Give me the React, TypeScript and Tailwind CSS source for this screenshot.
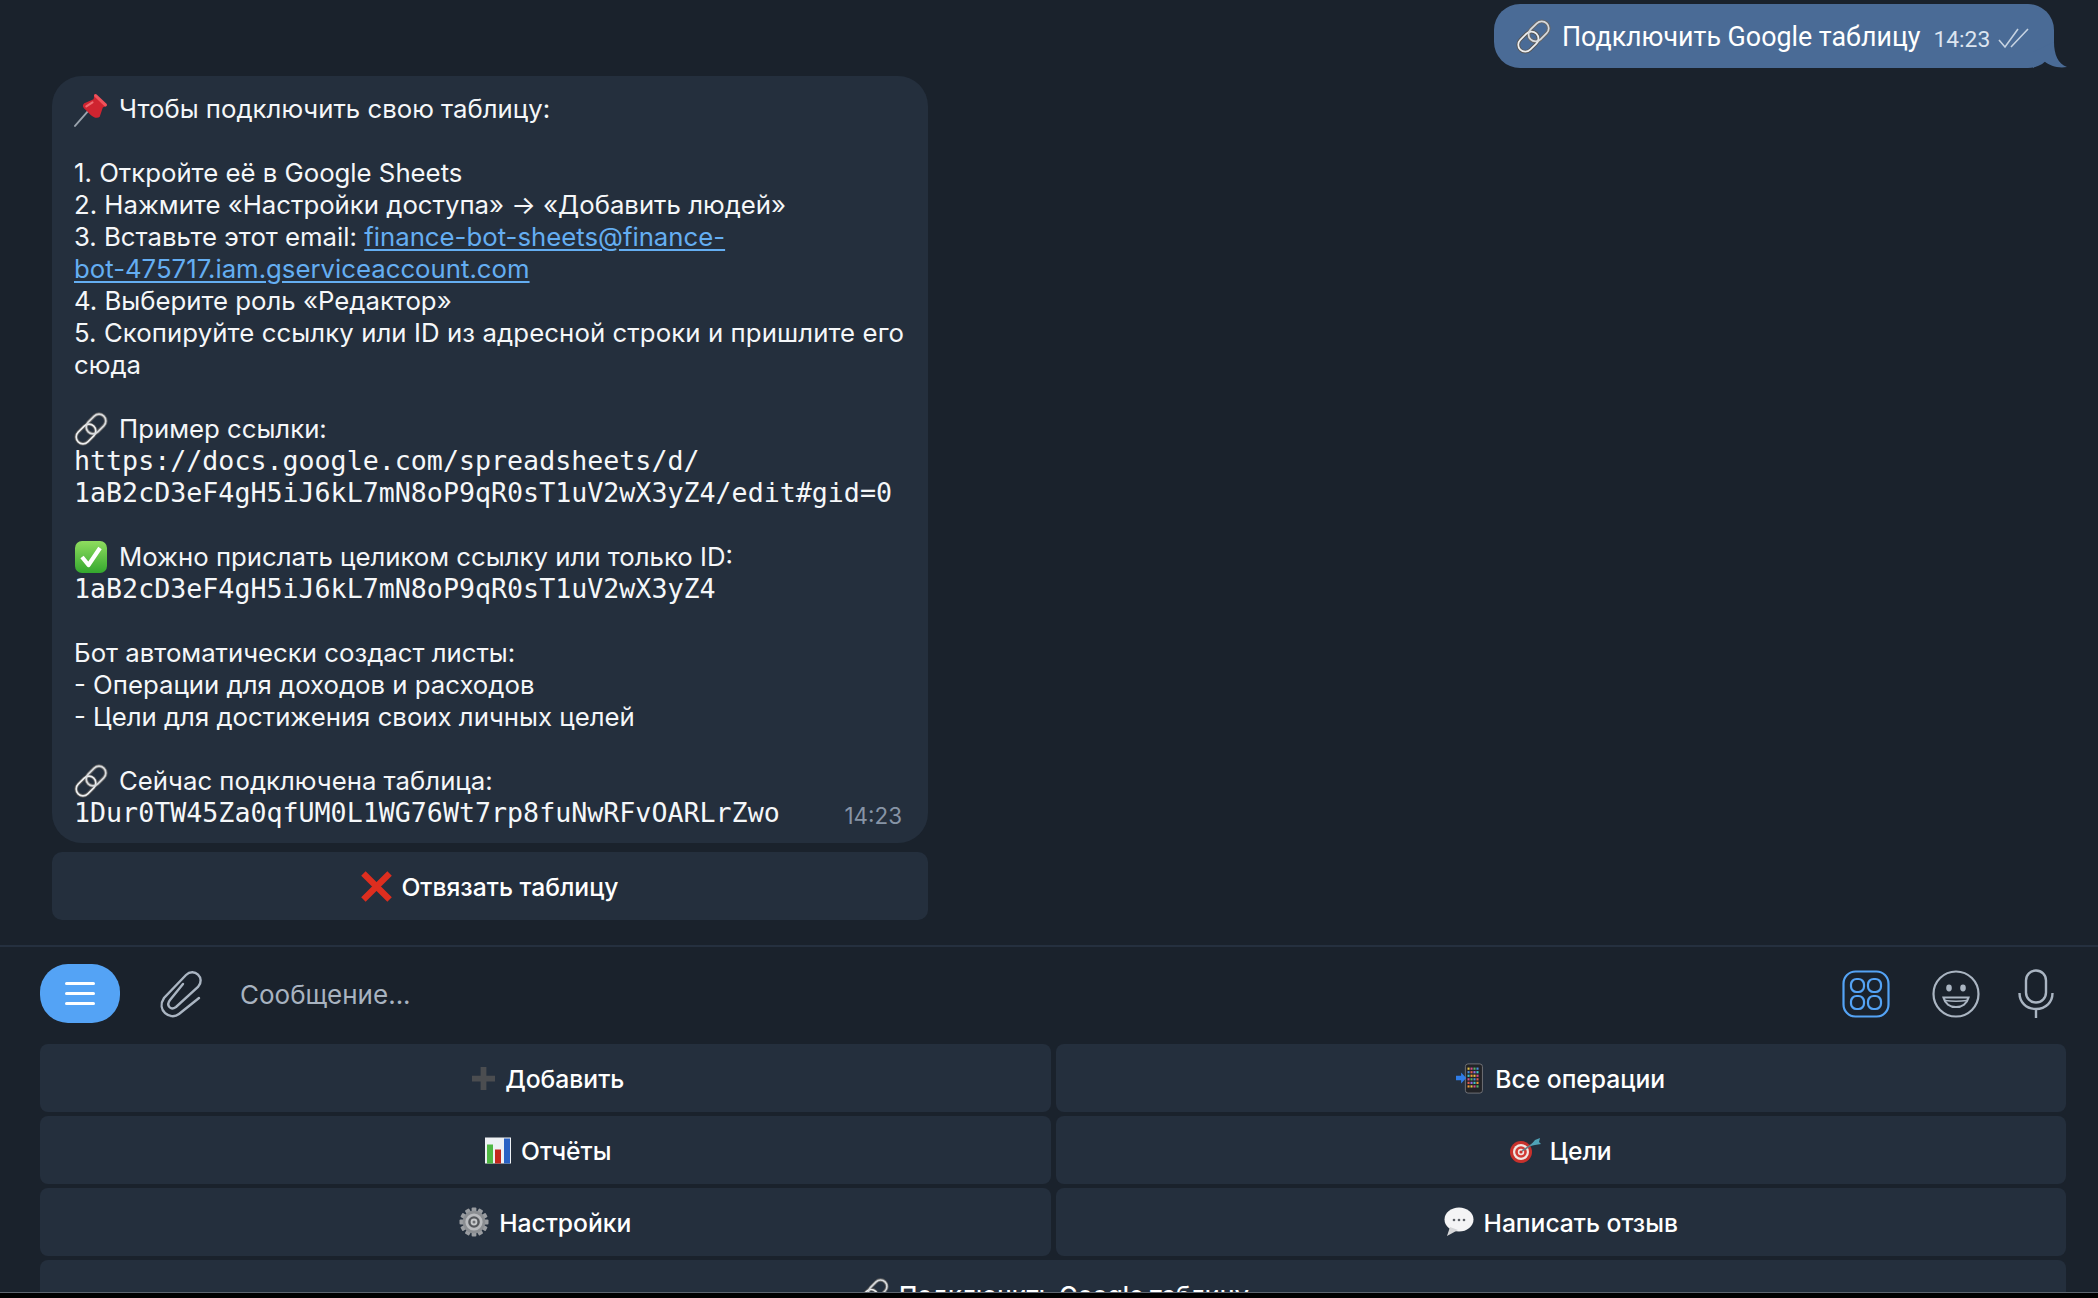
import React from 'react'

const sans = "font-['Inter','Noto_Sans',sans-serif]"

function LinkEmoji({ className = 'w-[34px] h-[34px]' }: { className?: string }) {
  return (
    <svg viewBox="2 2 30 30" className={`overflow-visible ${className}`} fill="none">
      <g transform="rotate(-45 17 17)">
        <rect x="1" y="11" width="19.5" height="12" rx="6" stroke="#565656" strokeWidth="3.2" />
        <rect x="13.5" y="11" width="19.5" height="12" rx="6" stroke="#666666" strokeWidth="3.2" />
        <rect x="1" y="11" width="19.5" height="12" rx="6" stroke="#eceef0" strokeWidth="1.5" />
        <rect x="13.5" y="11" width="19.5" height="12" rx="6" stroke="#d8dbde" strokeWidth="1.5" />
      </g>
    </svg>
  )
}

function PinEmoji() {
  return (
    <svg viewBox="0 0 34 34" className="w-[35px] h-[35px]">
      <path d="M1 33 L14 18" stroke="#9aa3ad" strokeWidth="1.8" strokeLinecap="round" />
      <path d="M20 2 L32 13 L28 15 L25 24 C23 26 19 25 16 22 L12 18 C8 15 8 13 10 11 L19 7 Z" fill="#cf2430" />
      <path d="M21 3.5 L30.5 12.5" stroke="#f0525b" strokeWidth="3" strokeLinecap="round" />
      <path d="M12 14 L18 10" stroke="#ef6a70" strokeWidth="2" strokeLinecap="round" />
    </svg>
  )
}

function CheckEmoji() {
  return (
    <svg viewBox="0 0 34 34" className="w-[34px] h-[34px]">
      <defs>
        <linearGradient id="checkBg" x1="0" y1="0" x2="0" y2="1">
          <stop offset="0" stopColor="#8fdc5f" />
          <stop offset="1" stopColor="#34a82e" />
        </linearGradient>
      </defs>
      <rect x="1" y="1" width="32" height="32" rx="7" fill="url(#checkBg)" />
      <path d="M8 17 L14.5 25 L26 8" fill="none" stroke="#fff" strokeWidth="4.2" strokeLinejoin="round" />
    </svg>
  )
}

function CrossEmoji() {
  return (
    <svg viewBox="0 0 32 32" className="w-[31px] h-[31px]">
      <path d="M2.5 2.5 L29.5 29.5 M29.5 2.5 L2.5 29.5" stroke="#dd2e1f" strokeWidth="6.5" />
    </svg>
  )
}

function PlusEmoji() {
  return (
    <svg viewBox="0 0 24 24" className="ml-[6px] w-[23px] h-[23px]">
      <path d="M9 0 H15 V9 H24 V15 H15 V24 H9 V15 H0 V9 H9 Z" fill="#4b4d50" />
    </svg>
  )
}

function PhoneEmoji() {
  const colors = ['#e8c547', '#d64f8a', '#58b368', '#4a90e2', '#e05a4f', '#9a6ee0', '#41c7c7', '#f29c38']
  const cells: React.ReactElement[] = []
  for (let r = 0; r < 6; r++) {
    for (let c = 0; c < 4; c++) {
      cells.push(
        <rect key={`${r}-${c}`} x={13.5 + c * 3.5} y={5 + r * 3.9} width="2.4" height="2.4" fill={colors[(r * 3 + c) % 8]} />
      )
    }
  }
  return (
    <svg viewBox="0 0 34 34" className="w-[29px] h-[31px]" preserveAspectRatio="none">
      <rect x="11" y="1" width="20" height="32" rx="3" fill="#222327" stroke="#77797d" />
      {cells}
      <path d="M0 14 H6 V10.5 L12 16.5 L6 22.5 V19 H0 Z" fill="#2f7de8" />
    </svg>
  )
}

function ChartEmoji() {
  return (
    <svg viewBox="0 0 26 26" className="ml-[6px] w-[26px] h-[27px]">
      <rect width="26" height="26" fill="#eef1f4" />
      <rect x="2" y="7" width="6" height="19" fill="#4fb843" />
      <rect x="10" y="12" width="6" height="14" fill="#c4281d" />
      <rect x="19" y="1" width="6" height="25" fill="#2a62c4" />
    </svg>
  )
}

function TargetEmoji() {
  return (
    <svg viewBox="0 0 32 26" className="-mr-[2px] w-[32px] h-[26px]">
      <circle cx="11" cy="15" r="11" fill="#c8312c" />
      <circle cx="11" cy="15" r="8" fill="#f1e6e2" />
      <circle cx="11" cy="15" r="5.8" fill="#d33a34" />
      <circle cx="11" cy="15" r="3.2" fill="#f1e6e2" />
      <circle cx="11" cy="15" r="1.6" fill="#c8312c" />
      <path d="M12 14 L24 6" stroke="#6b7b84" strokeWidth="1.6" />
      <path d="M20 9 L25 3 L30 1 L29 5 L31 7 L25 8 Z" fill="#4fa3b8" />
    </svg>
  )
}

function GearEmoji() {
  const teeth = Array.from({ length: 12 }, (_, i) => i * 30)
  return (
    <svg viewBox="0 0 30 30" className="w-[30px] h-[30px]">
      {teeth.map((deg) => (
        <rect key={deg} x="12.6" y="0.5" width="4.8" height="6" rx="1" fill="#9a9da1" transform={`rotate(${deg} 15 15)`} />
      ))}
      <circle cx="15" cy="15" r="11.2" fill="#8b8e92" />
      <circle cx="15" cy="15" r="8.6" fill="#b9bbbe" />
      <circle cx="15" cy="15" r="5.8" fill="#55585c" />
      <circle cx="15" cy="15" r="3.4" fill="#c7c9cb" />
      <circle cx="15" cy="15" r="1.5" fill="#6d7074" />
    </svg>
  )
}

function SpeechEmoji() {
  return (
    <svg viewBox="0 0 30 30" className="w-[30px] h-[30px]">
      <ellipse cx="15" cy="12.5" rx="14.5" ry="12" fill="#f4f4f5" />
      <path d="M6 20 L3 29 L14 23 Z" fill="#d5d6d8" />
      <circle cx="10" cy="13" r="1.3" fill="#5d6066" />
      <circle cx="15" cy="13" r="1.3" fill="#5d6066" />
      <circle cx="20" cy="13" r="1.3" fill="#5d6066" />
    </svg>
  )
}

function TextLine({ children }: { children?: React.ReactNode }) {
  return <div className="h-[32px] whitespace-nowrap flex items-center">{children ?? ' '}</div>
}

function EmojiLine({ emoji, children }: { emoji: React.ReactNode; children: React.ReactNode }) {
  return (
    <TextLine>
      <span className="w-[45px] shrink-0">{emoji}</span>
      <span>{children}</span>
    </TextLine>
  )
}

function Mono({ children }: { children: React.ReactNode }) {
  return <span className="font-['DejaVu_Sans_Mono',monospace] text-[26.65px]">{children}</span>
}

function Link({ children }: { children: React.ReactNode }) {
  return <span className="text-[#64aef2] underline underline-offset-[3px] decoration-[2px]">{children}</span>
}

function KeyButton({ emoji, label, wide }: { emoji?: React.ReactNode; label: string; wide?: boolean }) {
  return (
    <div className={`h-[68px] rounded-[8px] bg-[#242f3d] flex items-center justify-center gap-[10px] text-[24.65px] font-medium text-white ${wide ? 'col-span-2' : ''}`}>
      {emoji}
      <span className="mt-[2px]">{label}</span>
    </div>
  )
}

export default function App() {
  return (
    <div className={`${sans} w-[2098px] h-[1298px] overflow-hidden bg-[#1a222c] text-[25.75px] text-[#f5f7f9] flex flex-col`}>
      <div className="h-[945px] shrink-0 flex flex-col">
        {/* outgoing */}
        <div className="flex justify-end pt-[4px] pr-[44px]">
          <div className="relative h-[64px] w-[560px] rounded-[26px] bg-[#4a6b96] flex items-center pl-[22px] font-['Roboto',sans-serif]">
            <LinkEmoji className="w-[35px] h-[35px]" />
            <span className="ml-[11px] mt-[2px] text-[26.8px] text-white">Подключить Google таблицу</span>
            <span className="ml-[13px] text-[22.8px] text-[#dce5f0] mt-[9px]">14:23</span>
            <svg viewBox="0 0 32 22" className="ml-[8px] mt-[4px] w-[32px] h-[22px]" fill="none" stroke="#c6d3e2" strokeWidth="1.6">
              <path d="M1 13 L7 20 L20 2 M13 20 L30 2" />
            </svg>
            <svg viewBox="0 0 34 26" className="absolute right-[-13px] bottom-0 w-[34px] h-[26px]">
              <path d="M21 0 C21 12 25 22 34 25 C25 26.5 17 24 11 19 L0 26 L0 10 Z" fill="#4a6b96" />
            </svg>
          </div>
        </div>

        {/* incoming */}
        <div className="mt-[8px] ml-[52px] w-[876px]">
          <div className="relative rounded-[30px] bg-[#242f3d] pl-[22px] pt-[17px] pb-[14px]">
            <EmojiLine emoji={<PinEmoji />}>Чтобы подключить свою таблицу:</EmojiLine>
            <TextLine />
            <TextLine>1. Откройте её в Google Sheets</TextLine>
            <TextLine>2. Нажмите «Настройки доступа» → «Добавить людей»</TextLine>
            <TextLine>
              <span>3. Вставьте этот email:&nbsp;</span>
              <Link>finance-bot-sheets@finance-</Link>
            </TextLine>
            <TextLine>
              <Link>bot-475717.iam.gserviceaccount.com</Link>
            </TextLine>
            <TextLine>4. Выберите роль «Редактор»</TextLine>
            <TextLine>
              <span className="tracking-[0.09px]">5. Скопируйте ссылку или ID из адресной строки и пришлите его</span>
            </TextLine>
            <TextLine>сюда</TextLine>
            <TextLine />
            <EmojiLine emoji={<LinkEmoji />}>Пример ссылки:</EmojiLine>
            <TextLine><Mono>https://docs.google.com/spreadsheets/d/</Mono></TextLine>
            <TextLine><Mono>1aB2cD3eF4gH5iJ6kL7mN8oP9qR0sT1uV2wX3yZ4/edit#gid=0</Mono></TextLine>
            <TextLine />
            <EmojiLine emoji={<CheckEmoji />}>Можно прислать целиком ссылку или только ID:</EmojiLine>
            <TextLine><Mono>1aB2cD3eF4gH5iJ6kL7mN8oP9qR0sT1uV2wX3yZ4</Mono></TextLine>
            <TextLine />
            <TextLine>Бот автоматически создаст листы:</TextLine>
            <TextLine>- Операции для доходов и расходов</TextLine>
            <TextLine>- Цели для достижения своих личных целей</TextLine>
            <TextLine />
            <EmojiLine emoji={<LinkEmoji />}>Сейчас подключена таблица:</EmojiLine>
            <TextLine><Mono>1Dur0TW45Za0qfUM0L1WG76Wt7rp8fuNwRFvOARLrZwo</Mono></TextLine>
            <span className="absolute right-[26px] bottom-[10px] text-[22.4px] text-[#8794a6]">14:23</span>
          </div>
          <div className="mt-[9px] h-[68px] rounded-[10px] bg-[#242f3d] flex items-center justify-center gap-[9px] text-[24.65px] font-medium text-white">
            <CrossEmoji />
            <span className="mt-[2px]">Отвязать таблицу</span>
          </div>
        </div>
      </div>

      <div className="h-[2px] shrink-0 bg-[#25303f]" />

      {/* input */}
      <div className="h-[97px] shrink-0 flex items-center pl-[40px] pr-[44px] pb-[4px]">
        <div className="w-[80px] h-[59px] rounded-[28px] bg-[#54a3f5] flex flex-col items-center justify-center gap-[7px]">
          <div className="w-[30px] h-[3px] rounded-full bg-white" />
          <div className="w-[30px] h-[3px] rounded-full bg-white" />
          <div className="w-[30px] h-[3px] rounded-full bg-white" />
        </div>
        <svg viewBox="0 0 42 48" className="ml-[39px] w-[42px] h-[48px] overflow-visible" fill="none" stroke="#aab5c2" strokeWidth="2.4" strokeLinecap="round">
          <path d="M40 28 L20 44 C11 51 -3 40 5 28 L27 5 C35 -3 47 8 39 17 L17 37 C11 41 7 35 11 30 L24 14" />
        </svg>
        <span className="ml-[39px] mt-[2px] text-[26px] text-[#a8b3c0]">Сообщение...</span>
        <div className="ml-auto flex items-center">
          <svg viewBox="0 0 48 48" className="w-[48px] h-[48px]" fill="none" stroke="#54a3f5" strokeWidth="2.2">
            <rect x="1.5" y="1.5" width="45" height="45" rx="12" />
            <rect x="9" y="9" width="13" height="13" rx="5.5" />
            <rect x="26" y="9" width="13" height="13" rx="5.5" />
            <rect x="9" y="26" width="13" height="13" rx="5.5" />
            <rect x="26" y="26" width="13" height="13" rx="5.5" />
          </svg>
          <svg viewBox="0 0 48 48" className="ml-[42px] w-[48px] h-[48px]" fill="none" stroke="#aab5c2" strokeWidth="2.2">
            <circle cx="24" cy="24" r="22.5" />
            <ellipse cx="17" cy="18" rx="2.8" ry="3.4" fill="#aab5c2" stroke="none" />
            <ellipse cx="31" cy="18" rx="2.8" ry="3.4" fill="#aab5c2" stroke="none" />
            <path d="M11.5 27.5 H36.5 C35 33.5 30 37 24 37 C18 37 13 33.5 11.5 27.5 Z" />
            <path d="M13 30.5 Q24 32 35 30.5" strokeWidth="1.6" />
          </svg>
          <svg viewBox="0 0 36 50" className="ml-[38px] w-[36px] h-[50px]" fill="none" stroke="#aab5c2" strokeWidth="2.4">
            <rect x="8" y="1.5" width="20" height="32" rx="10" />
            <path d="M1.5 24 C1.5 33 8 40 18 40 C28 40 34.5 33 34.5 24 M18 40 V49" />
          </svg>
        </div>
      </div>

      {/* keyboard */}
      <div className="relative flex-1 pl-[40px] pr-[32px] overflow-hidden">
        <div className="grid grid-cols-2 gap-x-[5px] gap-y-[4px]">
          <KeyButton emoji={<PlusEmoji />} label="Добавить" />
          <KeyButton emoji={<PhoneEmoji />} label="Все операции" />
          <KeyButton emoji={<ChartEmoji />} label="Отчёты" />
          <KeyButton emoji={<TargetEmoji />} label="Цели" />
          <KeyButton emoji={<GearEmoji />} label="Настройки" />
          <KeyButton emoji={<SpeechEmoji />} label="Написать отзыв" />
          <KeyButton emoji={<LinkEmoji className="w-[32px] h-[32px]" />} label="Подключить Google таблицу" wide />
        </div>
      </div>

      {/* window edge, next window's text peeks in from below */}
      <div className="relative h-[6px] shrink-0 bg-black border-t border-[#5f6670] overflow-hidden pl-[1498px] flex gap-[36px] text-[26px] leading-[32px] text-[#9a9a9a] whitespace-nowrap">
        <span>Нос изображение</span>
        <span>k(1)Vk(1)</span>
      </div>
    </div>
  )
}
